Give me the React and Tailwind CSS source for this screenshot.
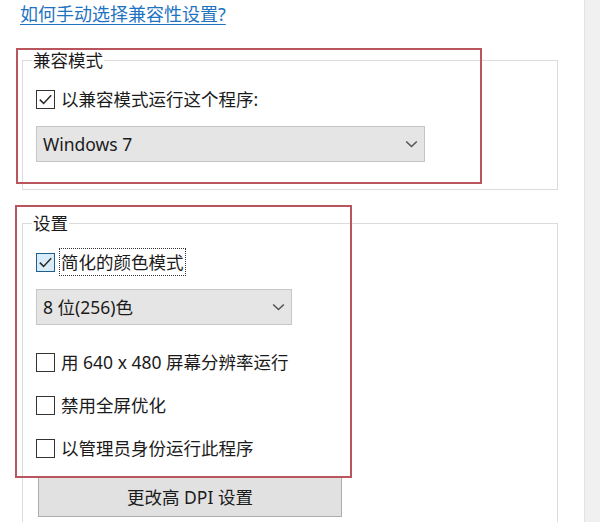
import React from 'react';

const Check = ({ checked, focus }) => (
  <span
    className={`w-[19px] h-[19px] shrink-0 border flex items-center justify-center ${
      focus ? 'border-[#1f5f8f] bg-[#d9ecf9]' : 'border-[#333333] bg-white'
    }`}
  >
    {checked && (
      <svg width="15" height="15" viewBox="0 0 15 15">
        <path d="M1.8 7.6 L5.6 11.4 L13.2 3.2" fill="none" stroke="#2b2b2b" strokeWidth="1.5" />
      </svg>
    )}
  </span>
);

const Row = ({ label, checked, focus, className = '' }) => (
  <div className={`flex items-center h-[28px] gap-[4px] ${className}`}>
    <Check checked={checked} focus={focus} />
    <span
      className={`h-[28px] px-[1px] flex items-center border ${
        focus ? 'border-dotted border-[#333333]' : 'border-transparent'
      }`}
    >
      {label}
    </span>
  </div>
);

const Select = ({ value, width, className = '' }) => (
  <div
    className={`h-[36px] flex items-center justify-between pl-[6px] pr-[6px] bg-[#e5e5e5] border border-[#c6c6c6] ${width} ${className}`}
  >
    <span>{value}</span>
    <svg width="13" height="8" viewBox="0 0 13 8">
      <path d="M1.2 1.5 L6.5 6.5 L11.8 1.5" fill="none" stroke="#555555" strokeWidth="1.6" />
    </svg>
  </div>
);

export default function App() {
  return (
    <div className="relative w-[600px] h-[522px] overflow-hidden bg-white flex text-[17.5px] leading-[24px] text-[#1b1b1b] font-['Noto_Sans','Noto_Sans_CJK_SC',sans-serif]">
      <div className="flex-1 pl-[20px] pt-[2px]">
        <a className="block w-max text-[18px] text-[#1f74c2] underline underline-offset-[3px] decoration-1">
          如何手动选择兼容性设置?
        </a>

        <fieldset className="ml-[2px] w-[536px] mt-[22px] border border-[#dcdcdc] pl-[13px] pt-[13px] pb-[27px]">
          <legend className="ml-[-4px] px-[1px]">兼容模式</legend>
          <Row label="以兼容模式运行这个程序:" checked />
          <Select value="Windows 7" width="w-[389px]" className="mt-[13px]" />
        </fieldset>

        <fieldset className="ml-[2px] w-[536px] mt-[21px] border border-[#dcdcdc] pl-[13px] pt-[13px] pb-[20px]">
          <legend className="ml-[-4px] px-[1px]">设置</legend>
          <Row label="简化的颜色模式" checked focus />
          <Select value="8 位(256)色" width="w-[256px]" className="mt-[13px]" />
          <div className="mt-[23px] flex flex-col gap-[15px]">
            <Row label="用 640 x 480 屏幕分辨率运行" />
            <Row label="禁用全屏优化" />
            <Row label="以管理员身份运行此程序" />
          </div>
          <button className="mt-[15px] ml-[2px] w-[304px] h-[40px] bg-[#e1e1e1] border border-[#adadad] flex items-center justify-center">
            更改高 DPI 设置
          </button>
        </fieldset>
      </div>

      <div className="w-[16px] h-full bg-[#f0f0f0] border-l border-[#e2e2e2]" />

      <div className="absolute left-[16px] top-[48px] w-[466px] h-[136px] border-2 border-[#b9555d]" />
      <div className="absolute left-[15px] top-[205px] w-[337px] h-[273px] border-2 border-[#b9555d]" />
    </div>
  );
}
